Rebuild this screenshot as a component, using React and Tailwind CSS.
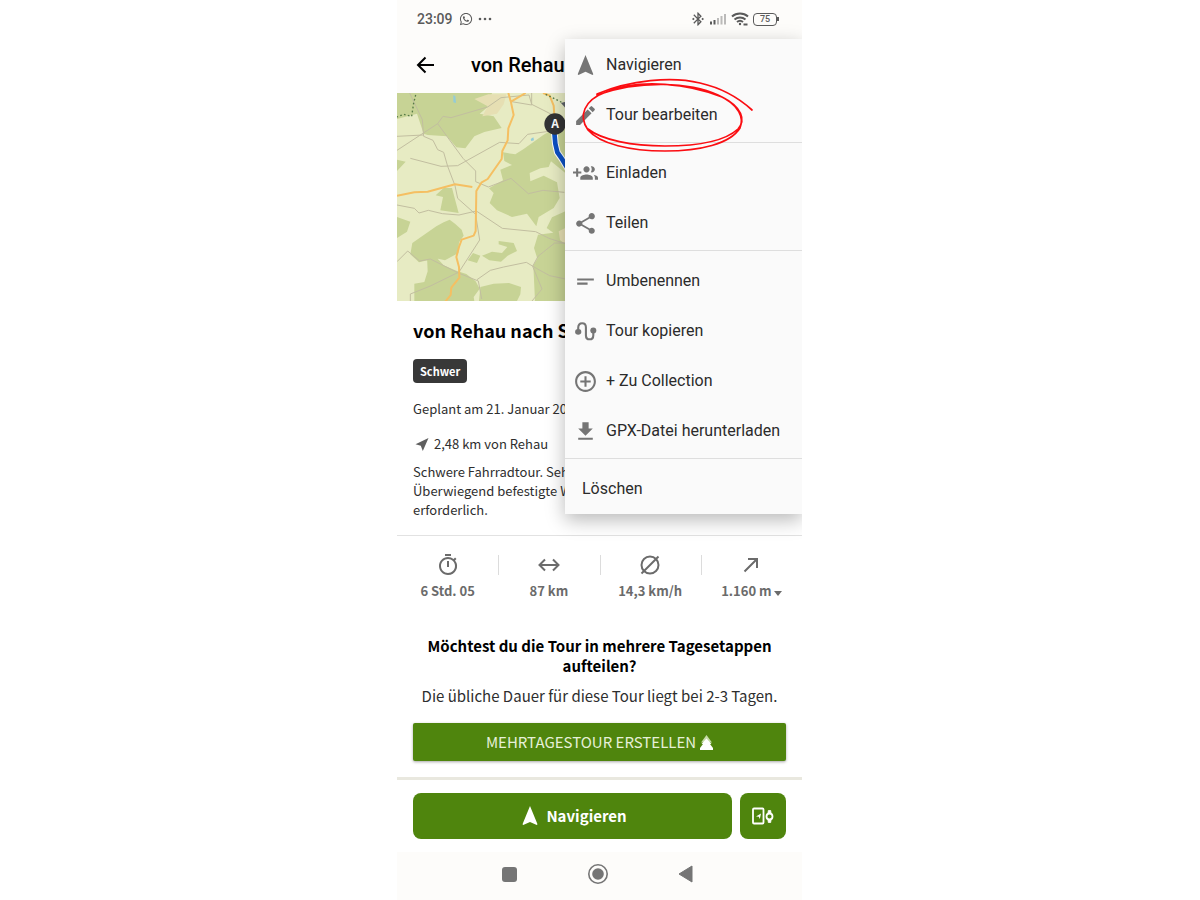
import { FaWhatsapp } from "react-icons/fa";
import {
  MdAddCircleOutline,
  MdBluetoothConnected,
  MdEdit,
  MdNavigation,
  MdOutlineTimer,
  MdShare,
  MdShortText,
} from "react-icons/md";

function InviteIcon({ className }) {
  return (
    <svg viewBox="0 0 24 24" fill="currentColor" className={className}>
      <path d="M8 10H5V7H3v3H0v2h3v3h2v-3h3v-2zm10 1c1.66 0 2.99-1.34 2.99-3S19.66 5 18 5c-.32 0-.63.05-.91.14.57.81.9 1.79.9 2.86s-.34 2.04-.9 2.86c.28.09.59.14.91.14zm-5 0c1.66 0 2.99-1.34 2.99-3S14.66 5 13 5c-1.66 0-3 1.34-3 3s1.34 3 3 3zm6.62 2.16c.83.73 1.38 1.66 1.38 2.84v2h3v-2c0-1.54-2.37-2.49-4.38-2.84zM13 13c-2 0-6 1-6 3v2h12v-2c0-2-4-3-6-3z" />
    </svg>
  );
}

function RouteIcon({ className }) {
  return (
    <svg viewBox="0 0 24 24" fill="none" className={className}>
      <path
        d="M5 12V8.500C5 5.800 6.600 4 8.800 4S12.400 5.600 12.400 8v7.500c0 2.500 1.400 4 3.500 4s3.600-1.600 3.600-4V11"
        stroke="currentColor"
        strokeWidth="2"
      />
      <path d="M5 9.500a3 3 0 0 1 3 3.200c0 1.500-1.300 2.300-3 2.300s-3-.9-3-2.400a3 3 0 0 1 3-3.100z" fill="currentColor" />
      <circle cx="19.500" cy="11" r="2.900" fill="currentColor" />
    </svg>
  );
}

function DownloadIcon({ className }) {
  return (
    <svg viewBox="0 0 24 24" fill="currentColor" className={className}>
      <path d="M19 9h-4V3H9v6H5l7 7 7-7zM5 18v2h14v-2H5z" />
    </svg>
  );
}

const menuGroups = [
  [
    { label: "Navigieren", Icon: MdNavigation },
    { label: "Tour bearbeiten", Icon: MdEdit },
  ],
  [
    { label: "Einladen", Icon: InviteIcon },
    { label: "Teilen", Icon: MdShare },
  ],
  [
    { label: "Umbenennen", Icon: MdShortText },
    { label: "Tour kopieren", Icon: RouteIcon },
    { label: "+ Zu Collection", Icon: MdAddCircleOutline },
    { label: "GPX-Datei herunterladen", Icon: DownloadIcon },
  ],
  [{ label: "Löschen" }],
];

function StatusBar() {
  return (
    <div className="flex h-[38px] items-center justify-between pl-5 pr-[23px] text-[#5a5a5a]">
      <div className="flex items-center gap-1.5 font-['Roboto',sans-serif] text-sm font-medium">
        <span>23:09</span>
        <FaWhatsapp className="size-[14px]" />
        <svg viewBox="0 0 14 4" className="-ml-px h-1 w-[14px]" fill="currentColor">
          <circle cx="2" cy="2" r="1.300" />
          <circle cx="7" cy="2" r="1.300" />
          <circle cx="12" cy="2" r="1.300" />
        </svg>
      </div>
      <div className="flex items-center gap-1">
        <MdBluetoothConnected className="size-4" />
        <svg viewBox="0 0 17 12" className="h-3 w-[17px]" fill="currentColor">
          <rect x="0" y="8.500" width="2" height="3" />
          <rect x="3.500" y="7" width="2" height="4.500" />
          <g opacity=".4">
            <rect x="7" y="5" width="2" height="6.500" />
            <rect x="10.500" y="3" width="2" height="8.500" />
            <rect x="14" y="1" width="2" height="10.500" />
          </g>
        </svg>
        <svg viewBox="0 0 18 14" className="h-[14px] w-[18px]" fill="none" stroke="currentColor" strokeWidth="2">
          <path d="M1 4.600c4.500-4 11.500-4 16 0M3.500 7.400c3.200-2.700 7.800-2.700 11 0M6 10c1.800-1.500 4.200-1.500 6 0" />
          <circle cx="9" cy="12" r="1.200" fill="currentColor" stroke="none" />
          <path d="M12.500 12.500h4" strokeWidth="2" />
        </svg>
        <div className="flex items-center">
          <span className="flex h-[13px] w-6 items-center justify-center rounded-[4px] border border-[#5a5a5a] font-['Roboto',sans-serif] text-[9px] leading-none font-medium">
            75
          </span>
          <span className="h-1 w-0.5 bg-[#5a5a5a]" />
        </div>
      </div>
    </div>
  );
}

function TourMap() {
  return (
    <svg viewBox="0 0 1215 624" className="block h-52 w-full" preserveAspectRatio="xMinYMin slice">
      <rect width="1215" height="624" fill="#e7ebc3" />
      <g fill="#c7d395">
        <path d="M0 0H285L272 42L248 62L290 70L314 105L262 117L232 130L205 166L178 163L150 130L92 126L80 122L60 62L0 78Z" />
        <path d="M0 200l26 6L0 234zM140 285l25 0 20 75-55-8 8-40-22-5z" />
        <path d="M505 100L470 108L440 125L380 168L355 184L318 178L322 204L345 216L310 230L318 262L276 286L290 300L278 330L300 352L345 372L390 362L418 400L425 372L470 345L488 315L480 268L440 248L400 265L398 240L430 226L455 222L462 205L505 240Z" />
        <path d="M0 372l40 14-10 30L0 435zM118 400l22-12 18-8 16 12 20 18 6 18-14 20-2 32-40 22-28-6-50 12-26-24 6-34zM90 490l30 5 20 22 38 16 30 10 28 22 12 22-18 25 2 12H52v-52l30-5 10-32z" />
        <path d="M305 444l45 6 10 24-28 14-20 18-35-4-22-14 30-12 30 4 16-18-26-8zM228 480l22 8-10 22-28-8zM250 582l40-10 46-2 36 12-2 22-10 20H246zM505 355l-40 18-16 32 20 14-46 6-12 40 10 32-12 20 5 107h91z" />
      </g>
      <path d="M232 18l42-14 54 0-8 30-20 28-44 8 16-30zM505 405l-20 10 4 26 16 12z" fill="#e6dfb3" />
      <g fill="none" stroke="#c2bea0" strokeWidth="3">
        <path d="M38 0l38 80 4 50 28 12 14 28 18 8 12 42 22 58 8 38 54 48" />
        <path d="M0 130l78-4M122 92l76 104 38 38 0 32 38 16 68-26 52 46 44-10 64 6" />
        <path d="M0 172L122 92l16-22 24 4 110-32 40-28 84-8 8 28 40 20 54 28M40 196l92 24 50-2 126-70 58 4 26-28 112-16" />
        <path d="M0 336l52 10 14 14 28-8 42 10 50 4 52-12 78 52 100 10 40 20 49 16M236 365l12 76-62 96-86 42-60 24v22M0 506l32-32 36 30 32-6 84 42 60 24 10 54M240 560l40-28 40-10 68-14 30 18 40 22 48 10M505 450h-32l-50 40-16 30 28 68-30 36M404 0l0 36-60-10" />
      </g>
      <path
        d="M334 0l8 28 8 38-16 40-2 36-16 32-2 24-42 60-18 10-16 26-2 120-6 14-36 12-8 22-8 30 8 30 1 32-24 30-2 22-24 30M342 26l44-26M0 308l52-10 40-2 82-22 52 8M438 0l20 8 12 30 2 30"
        fill="none"
        stroke="#f5bf62"
        strokeWidth="6"
        strokeLinejoin="round"
      />
      <path d="M56 6l-6 24-6 40-24-6-20 8M446 4l56 28" fill="none" stroke="#557a45" strokeWidth="4" strokeDasharray="5 7" />
      <path d="M169 6l6 4 2 20-8-2zM401 138l8-5 2 9-8 2z" fill="#92cbd8" />
      <path d="M492 30l14-4v20z" fill="#5d6268" />
      <path d="M472 118l3 34 6 26 14 20 24 40" fill="none" stroke="#fff" strokeWidth="20" />
      <path d="M472 118l3 34 6 26 14 20 24 40" fill="none" stroke="#0b50c4" strokeWidth="14" />
      <circle cx="474" cy="93" r="32" fill="#333335" />
      <text x="474" y="106" textAnchor="middle" fontFamily="Noto Sans CJK SC, sans-serif" fontWeight="700" fontSize="36" fill="#fff">
        A
      </text>
    </svg>
  );
}

function Menu() {
  return (
    <div className="absolute top-[39px] right-0 w-[237px] bg-[#fafafa] pt-px font-['Roboto',sans-serif] text-base text-[#2b2b2b] shadow-[0_6px_18px_rgba(0,0,0,0.28)]">
      {menuGroups.map((group, i) => (
        <div key={i} className={i > 0 ? "mt-0.5 border-t border-[#dedede] pt-[5px]" : ""}>
          {group.map(({ label, Icon }) => (
            <button key={label} className="flex h-[50px] w-full items-center gap-2 pl-2 text-left whitespace-nowrap">
              {Icon ? <Icon className="size-[25px] shrink-0 text-[#757575]" /> : <span className="w-px" />}
              {label}
            </button>
          ))}
        </div>
      ))}
      <svg
        viewBox="575 75 185 80"
        className="pointer-events-none absolute top-9 left-[10px] h-20 w-[185px]"
        fill="none"
        stroke="#fb0d12"
        strokeWidth="1.700"
        strokeLinecap="round"
      >
        <path d="M597 94C630 80 672 76 700 83C722 88 740 99 752 110" />
        <path d="M597 95C640 80 690 82 718 95C740 105 744 118 740 128C730 144 700 151 665 151C630 151 600 144 588 130C578 116 584 100 606 92C640 78 690 84 722 97C742 107 746 120 738 129C724 142 698 146 665 146C632 146 602 140 588 129" />
      </svg>
    </div>
  );
}

const stats = [
  { value: "6 Std. 05", icon: <MdOutlineTimer className="size-6" /> },
  {
    value: "87 km",
    icon: (
      <svg viewBox="0 0 24 24" className="size-6" fill="none" stroke="currentColor" strokeWidth="2">
        <path d="M3 12h18M8 6.500L2.500 12L8 17.500M16 6.500l5.500 5.500L16 17.500" />
      </svg>
    ),
  },
  {
    value: "14,3 km/h",
    icon: (
      <svg viewBox="0 0 24 24" className="size-6" fill="none" stroke="currentColor" strokeWidth="2">
        <circle cx="12" cy="12" r="8.500" />
        <path d="M3.500 20.500l17-17" />
      </svg>
    ),
  },
  {
    value: "1.160 m",
    more: true,
    icon: (
      <svg viewBox="0 0 24 24" className="size-6" fill="none" stroke="currentColor" strokeWidth="2">
        <path d="M5.500 18.500L18 6M9 6h9v9" />
      </svg>
    ),
  },
];

function Stats() {
  return (
    <div className="grid grid-cols-4 border-t border-[#e2e2e2] pt-[17px] text-[#6b6b6b]">
      {stats.map(({ value, icon, more }, i) => (
        <div key={value} className="relative flex flex-col items-center gap-1">
          {i > 0 && <span className="absolute top-0.5 left-0 h-5 w-px bg-[#dcdcdc]" />}
          {icon}
          <span className="flex items-center gap-0.5 text-[13px] leading-5 font-bold">
            {value}
            {more && (
              <svg viewBox="0 0 8 5" className="mt-1 h-[5px] w-2" fill="currentColor">
                <path d="M0 0h8L4 5z" />
              </svg>
            )}
          </span>
        </div>
      ))}
    </div>
  );
}

function SystemNav() {
  return (
    <nav className="flex h-12 items-center justify-center gap-[66px] bg-[#fdfcfa] pr-1 pb-1 text-[#757575]">
      <button aria-label="Letzte Apps" className="flex w-[22px] justify-center">
        <span className="size-[15px] rounded-[3px] bg-current" />
      </button>
      <button aria-label="Startseite">
        <svg viewBox="0 0 22 22" className="size-[22px]">
          <circle cx="11" cy="11" r="9.200" fill="none" stroke="currentColor" strokeWidth="1.600" />
          <circle cx="11" cy="11" r="5.800" fill="currentColor" />
        </svg>
      </button>
      <button aria-label="Zurück">
        <svg viewBox="0 0 22 22" className="size-[22px]" fill="currentColor">
          <path d="M4 11L17 3v16z" strokeLinejoin="round" stroke="currentColor" />
        </svg>
      </button>
    </nav>
  );
}

export default function App() {
  return (
    <div className="min-h-screen bg-white pr-px font-['Noto_Sans_CJK_SC',sans-serif] text-[#2e2e2e]">
      <div className="relative mx-auto flex min-h-screen w-full max-w-[405px] flex-col overflow-hidden">
        <header className="bg-[#fdfcfa]">
          <StatusBar />
          <div className="flex h-[55px] items-center gap-9 pb-0.5 pl-[18px] text-black">
            <button aria-label="Zurück">
              <svg viewBox="0 0 20 20" className="size-5" fill="none" stroke="currentColor" strokeWidth="2">
                <path d="M19 10H3M10.500 2.500L3 10l7.500 7.500" />
              </svg>
            </button>
            <h1 className="font-['Roboto',sans-serif] text-xl font-medium whitespace-nowrap">von Rehau</h1>
          </div>
        </header>
        <TourMap />
        <main className="flex-1">
          <section className="px-4 pt-[15px] pb-4 text-[13px]">
            <h2 className="text-lg leading-7 font-bold whitespace-nowrap text-black">von Rehau nach S</h2>
            <span className="mt-[15px] inline-flex h-6 items-center rounded-[4px] bg-[#383838] px-[7px] text-[11px] font-bold text-white">
              Schwer
            </span>
            <p className="mt-4 leading-5">Geplant am 21. Januar 20</p>
            <p className="mt-[15px] flex items-center gap-1 pl-px leading-5">
              <svg viewBox="0 0 16 16" className="size-4" fill="#5f5f5f">
                <path d="M14.500 2L1.500 8.200l5.300 1.600 2 5.200z" />
              </svg>
              2,48 km von Rehau
            </p>
            <p className="mt-2 leading-[19px]">
              Schwere Fahrradtour. Seh
              <br />
              Überwiegend befestigte W
              <br />
              erforderlich.
            </p>
          </section>
          <Stats />
          <section className="px-4 pt-[35px] pb-4 text-center">
            <h3 className="px-3 text-[15px] leading-5 font-bold text-black">
              Möchtest du die Tour in mehrere Tagesetappen aufteilen?
            </h3>
            <p className="mt-2 text-[15px] leading-6">Die übliche Dauer für diese Tour liegt bei 2-3 Tagen.</p>
            <button className="mt-[15px] flex h-[38px] w-full items-center justify-center gap-1 rounded-[2px] bg-[#4f850d] text-[15px] text-[#e6f0d8] shadow-[0_1px_3px_rgba(0,0,0,0.35)]">
              MEHRTAGESTOUR ERSTELLEN
              <svg viewBox="0 0 13 15" className="h-[15px] w-[13px]">
                <path d="M6.500 0l5.500 7.500H1z" fill="#c6dba8" />
                <path d="M6.500 3.500l5 5.500H10l3 4V15H0v-2L3 9H1.500z" fill="#fff" />
              </svg>
            </button>
          </section>
        </main>
        <div className="flex gap-2 border-t-[3px] border-[#e9e8df] px-4 pt-[13px] pb-[13px] text-white">
          <button className="flex h-[46px] flex-1 items-center justify-center gap-1 rounded-lg bg-[#4f850d] text-[15px] font-bold">
            <MdNavigation className="size-6" />
            Navigieren
          </button>
          <button aria-label="An Gerät senden" className="flex h-[46px] w-[46px] items-center justify-center rounded-lg bg-[#4f850d]">
            <svg viewBox="0 0 22 18" className="h-[18px] w-[22px]" fill="none" stroke="currentColor" strokeWidth="1.800">
              <rect x="1" y="1.500" width="10.500" height="15" rx="1" />
              <path d="M4 9.500L9 6.500L7.800 12L6.800 9.800z" fill="currentColor" stroke="none" />
              <circle cx="17.500" cy="9.500" r="3" />
              <path d="M16 6l.3-2.500h2.400L19 6zM16 13l.3 2.500h2.400L19 13z" fill="currentColor" strokeWidth=".8" />
            </svg>
          </button>
        </div>
        <SystemNav />
        <Menu />
      </div>
    </div>
  );
}
